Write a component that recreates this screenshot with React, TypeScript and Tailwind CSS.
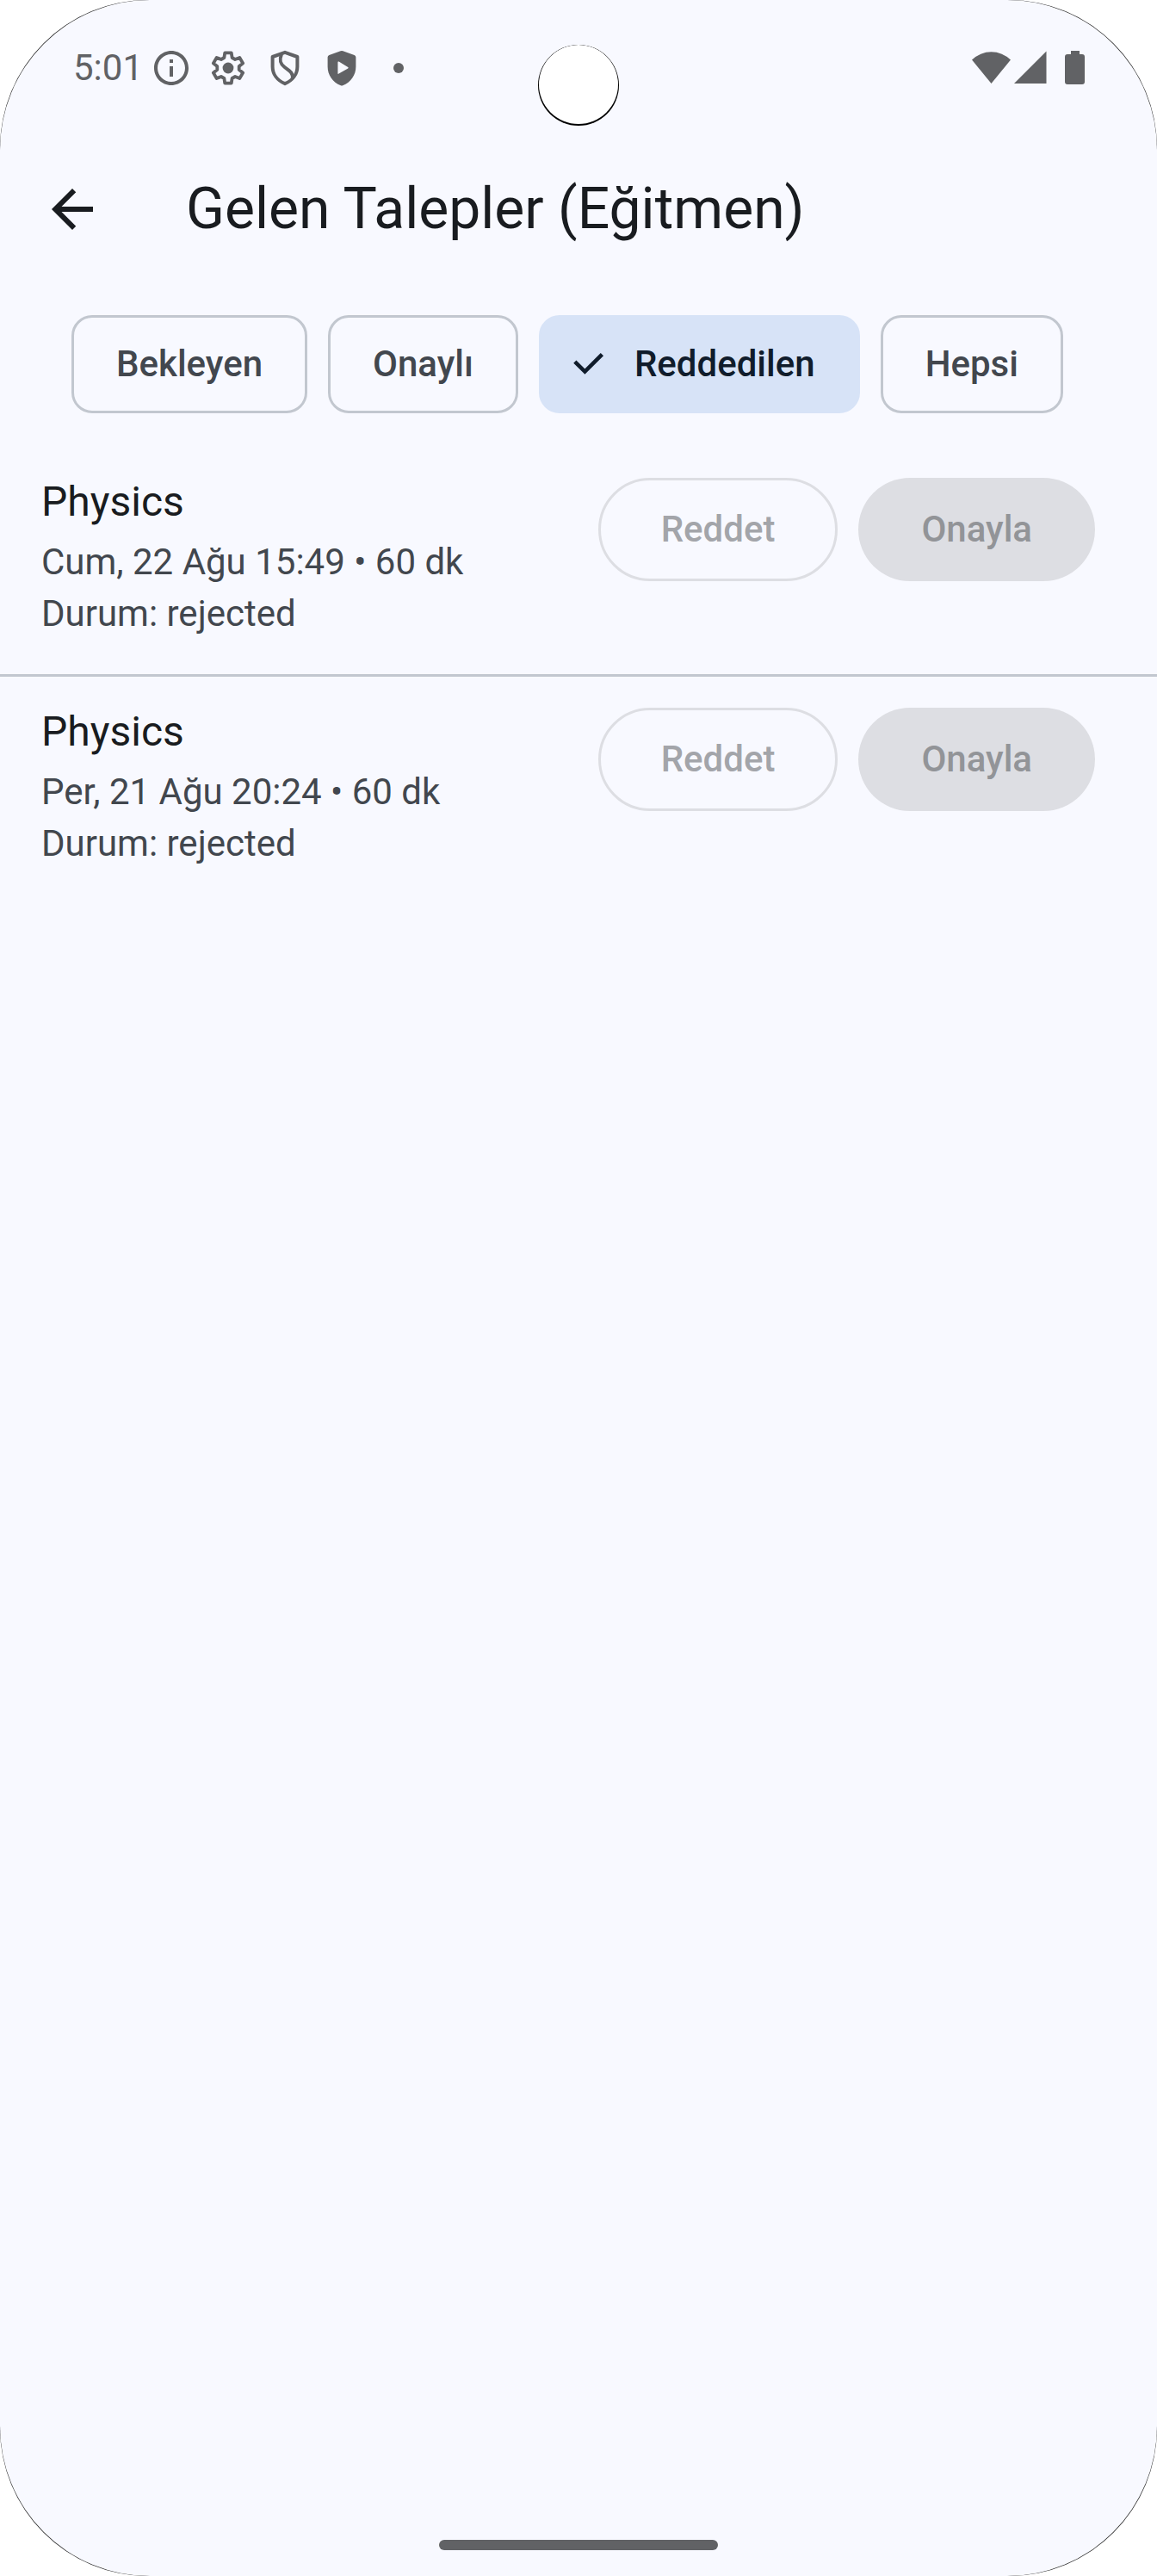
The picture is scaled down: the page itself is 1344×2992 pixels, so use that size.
import React from "react";

const filters = ["Bekleyen", "Onaylı", "Reddedilen", "Hepsi"];

const requests = [
  { id: 1, subject: "Physics", when: "Cum, 22 Ağu 15:49 • 60 dk", status: "Durum: rejected" },
  { id: 2, subject: "Physics", when: "Per, 21 Ağu 20:24 • 60 dk", status: "Durum: rejected" },
];

function StatusBar() {
  return (
    <div className="relative flex h-[158px] items-center justify-between pl-[85px] pr-[78px] text-[#616265]">
      <div className="flex items-center">
        <span className="w-[90px] text-[42px] leading-12">5:01</span>
        <div className="flex items-center gap-[18px]">
          <svg className="size-12" viewBox="0 0 24 24" fill="currentColor" aria-hidden="true">
            <path d="M11 7h2v2h-2zm0 4h2v6h-2zm1-9C6.48 2 2 6.48 2 12s4.48 10 10 10 10-4.48 10-10S17.52 2 12 2m0 18c-4.41 0-8-3.59-8-8s3.59-8 8-8 8 3.59 8 8-3.59 8-8 8" />
          </svg>
          <svg className="size-12" viewBox="0 0 24 24" fill="none" stroke="currentColor" strokeWidth="1.9" strokeLinejoin="round" aria-hidden="true">
            <path d="M13.9 3.2L14.3 6L16.05 7.01L18.67 5.95L20.57 9.25L18.35 10.99V13.01L20.57 14.75L18.67 18.05L16.05 16.99L14.3 18L13.9 20.8H10.1L9.7 18L7.95 16.99L5.33 18.05L3.43 14.75L5.65 13.01V10.99L3.43 9.25L5.33 5.95L7.95 7.01L9.7 6L10.1 3.2Z" />
            <circle cx="12" cy="12" r="3.2" fill="currentColor" stroke="none" />
          </svg>
          <svg className="size-12" viewBox="0 0 24 24" fill="none" stroke="currentColor" strokeWidth="2" strokeLinejoin="round" aria-hidden="true">
            <path d="M12 2.9L19.2 5.5V11.2C19.2 15.6 16.4 19.2 12 21.1C7.6 19.2 4.8 15.6 4.8 11.2V5.5Z" />
            <path d="M10 4C8.6 7.5 9.2 9.5 11.8 11.5L14.5 13.6C16 14.8 16.8 16 16.4 18.3" />
          </svg>
          <svg className="size-12" viewBox="0 0 24 24" fill="currentColor" aria-hidden="true">
            <path
              fillRule="evenodd"
              d="M11.3 2.1Q12 1.8 12.7 2.1L19.3 4.5Q20.2 4.9 20.2 5.8V11.2C20.2 16 17.3 20.2 12.6 22.1Q12 22.4 11.4 22.1C6.700 20.2 3.800 16 3.800 11.2V5.8Q3.800 4.900 4.700 4.500ZM9.700 8.700V15Q9.700 15.700 10.300 15.300L15.600 12.200Q16.100 11.800 15.600 11.500L10.300 8.300Q9.700 8 9.700 8.700Z"
            />
          </svg>
          <svg className="size-12" viewBox="0 0 24 24" fill="currentColor" aria-hidden="true">
            <circle cx="12" cy="12" r="3" />
          </svg>
        </div>
      </div>
      <div className="absolute left-1/2 top-[52px] size-[94px] -translate-x-1/2 overflow-hidden rounded-full bg-black">
        <div className="mx-auto size-[92px] rounded-full bg-white" />
      </div>
      <svg className="h-12 w-[140px]" viewBox="0 0 140 48" fill="currentColor" aria-hidden="true">
        <path d="M3 14.500A32 32 0 0 1 48 14.500L25.500 42Z" />
        <path d="M89.500 4.500V42H52Z" />
        <path d="M118 4h10v4h3q3 0 3 3v29q0 3-3 3h-17q-3 0-3-3V11q0-3 3-3h4z" />
      </svg>
    </div>
  );
}

export default function App() {
  const [selected, setSelected] = React.useState("Reddedilen");
  return (
    <div className="min-h-screen bg-white font-['Roboto',sans-serif]">
      <div className="min-h-screen rounded-[172px] bg-[#222222]">
        <div className="flex min-h-screen flex-col rounded-[174px] bg-[#f8f9ff]">
          <StatusBar />
          <header className="flex h-[170px] items-center pl-12">
            <button type="button" aria-label="Geri" className="flex size-[72px] items-center justify-center text-[#191c20]">
              <svg className="size-[72px]" viewBox="0 0 24 24" fill="currentColor" aria-hidden="true">
                <path d="M20 11H7.83l5.590-5.590L12 4l-8 8 8 8 1.410-1.410L7.830 13H20z" />
              </svg>
            </button>
            <h1 className="pl-24 text-[66px] leading-[84px] text-[#191c20]">Gelen Talepler (Eğitmen)</h1>
          </header>
          <main className="flex-1">
            <div className="flex gap-6 pt-[38px] pr-6 pb-[39px] pl-[83px]" role="group" aria-label="Durum filtresi">
              {filters.map((name) => {
                const on = name === selected;
                return (
                  <button
                    key={name}
                    type="button"
                    aria-pressed={on}
                    onClick={() => setSelected(name)}
                    className={
                      "flex h-[114px] items-center rounded-3xl border-[3px] text-[42px] leading-[60px] font-medium " +
                      (on
                        ? "border-[#d7e3f7] bg-[#d7e3f7] pr-[49px] pl-[30px] text-[#101c2b]"
                        : "border-[#c2c7cf] px-[49px] text-[#42474e]")
                    }
                  >
                    {on && (
                      <svg className="mr-[30px] size-12" viewBox="0 0 24 24" fill="none" stroke="currentColor" strokeWidth="2.3" aria-hidden="true">
                        <path d="M4.400 10.600L10.200 16.300L20.200 6.300" />
                      </svg>
                    )}
                    {name}
                  </button>
                );
              })}
            </div>
            <ul>
              {requests.map((r) => (
                <li
                  key={r.id}
                  className="flex items-start justify-between border-b-[3px] border-[#c2c7cf] pt-7 pr-[72px] pb-10 pl-12 last:border-b-0"
                >
                  <div>
                    <h2 className="mb-1 text-[48px] leading-[72px] text-[#191c20]">{r.subject}</h2>
                    <p className="text-[42px] leading-[60px] text-[#42474e]">{r.when}</p>
                    <p className="text-[42px] leading-[60px] text-[#42474e]">{r.status}</p>
                  </div>
                  <div className="flex gap-6 pt-2 text-[42px] leading-[60px] font-medium">
                    <button type="button" disabled className="h-[120px] rounded-full border-[3px] border-[#dddee3] px-[70px] text-[#a3a5aa]">
                      Reddet
                    </button>
                    <button type="button" disabled className="h-[120px] rounded-full bg-[#dddee3] px-[73px] text-[#929498]">
                      Onayla
                    </button>
                  </div>
                </li>
              ))}
            </ul>
          </main>
          <div className="flex justify-center pb-[30px]">
            <div className="h-3 w-[324px] rounded-full bg-[#616265]" />
          </div>
        </div>
      </div>
    </div>
  );
}
